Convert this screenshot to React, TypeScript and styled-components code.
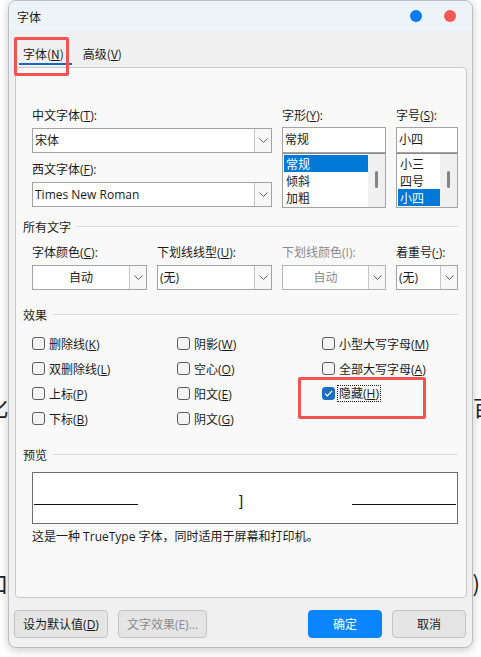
import React from "react";
import styled, { createGlobalStyle, css } from "styled-components";

const Global = createGlobalStyle`
  html, body { margin: 0; padding: 0; background: #ffffff; }
  body {
    width: 481px; height: 657px; overflow: hidden;
    font-family: "Open Sans", "Noto Sans CJK SC", sans-serif;
    font-size: 12px; color: #1a1a1a;
  }
  * { box-sizing: border-box; }
`;

const Desktop = styled.div`
  position: relative;
  width: 481px;
  height: 657px;
  overflow: hidden;
  background: #ffffff;
`;

const Doc = styled.div`
  display: flex;
  flex-direction: column;
  gap: 152px;
  padding-top: 394px;
  margin: 0 -14px;
  font-family: "Noto Sans CJK SC", serif;
  font-size: 22px;
  line-height: 24px;
  color: #222;
`;

const DocLine = styled.div<{ $right: number }>`
  display: flex;
  justify-content: space-between;
  padding-right: ${(p) => p.$right}px;
`;

const Window = styled.div`
  position: absolute;
  left: 8px;
  top: 0;
  width: 465px;
  height: 648px;
  border: 1px solid #bdbdbd;
  border-radius: 8px;
  background: #f0f0f0;
  box-shadow: 0 2px 10px rgba(0, 0, 0, 0.22);
  display: flex;
  flex-direction: column;
  overflow: hidden;
`;

const TitleBar = styled.div`
  height: 30px;
  flex: none;
  background: #edf4f8;
  display: flex;
  align-items: center;
  padding: 0 16px 0 8px;
  font-family: "Noto Sans CJK SC", sans-serif;
  font-size: 12px;
`;

const Title = styled.span`
  flex: 1;
`;

const Dot = styled.span<{ $color: string }>`
  width: 12px;
  height: 12px;
  border-radius: 50%;
  background: ${(p) => p.$color};
  & + & { margin-left: 22px; }
`;

const Body = styled.div`
  flex: 1;
  display: flex;
  flex-direction: column;
  padding: 0 5px 9px 6px;
`;

const TabBar = styled.div`
  height: 36px;
  flex: none;
  display: flex;
  gap: 7px;
  padding-left: 4px;
`;

const Tab = styled.div<{ $active?: boolean }>`
  display: flex;
  flex-direction: column;
  padding: 14px 8px 2px 4px;
  line-height: 18px;
  font-family: "Noto Sans CJK SC", sans-serif;
  &::after {
    content: "";
    height: 2px;
    margin: 0 -8px 0 -4px;
    background: ${(p) => (p.$active ? "#1a67c4" : "transparent")};
  }
`;

const Panel = styled.div`
  height: 531px;
  flex: none;
  border: 1px solid #c9c9c9;
  border-radius: 4px;
  background: #f9f9f9;
  padding: 40px 8px 0 7px;
  display: flex;
  flex-direction: column;
`;

const FontGrid = styled.div`
  display: grid;
  grid-template-columns: 240px 104px 62px;
  column-gap: 10px;
  padding-left: 9px;
`;

const Col = styled.div`
  display: flex;
  flex-direction: column;
`;

const Label = styled.div<{ $disabled?: boolean; $gap?: number; $top?: number }>`
  line-height: 16px;
  height: 16px;
  white-space: nowrap;
  margin-bottom: ${(p) => p.$gap ?? 4}px;
  margin-top: ${(p) => p.$top ?? 0}px;
  color: ${(p) => (p.$disabled ? "#8a8a8a" : "#1a1a1a")};
  u { text-underline-offset: 1px; }
`;

const ComboBox = styled.div<{ $disabled?: boolean }>`
  height: 25px;
  display: flex;
  border: 1px solid ${(p) => (p.$disabled ? "#b4b4b4" : "#a3a3a3")};
  background: #ffffff;
  color: ${(p) => (p.$disabled ? "#8c8c8c" : "#1a1a1a")};
`;

const ComboValue = styled.div<{ $center?: boolean }>`
  flex: 1;
  line-height: 23px;
  padding-left: 2px;
  white-space: nowrap;
  overflow: hidden;
  ${(p) =>
    p.$center &&
    css`
      text-align: center;
      padding-left: 0;
    `}
`;

const DropButton = styled.div`
  width: 17px;
  border-left: 1px solid #c6c6c6;
  background: #f7f7f7;
  display: flex;
  align-items: center;
  justify-content: center;
`;

const TextInput = styled.div`
  height: 26px;
  border: 1px solid #a3a3a3;
  background: #ffffff;
  line-height: 24px;
  padding-left: 2px;
`;

const ListBox = styled.div`
  height: 55px;
  border: 1px solid #a3a3a3;
  border-top-color: #8c8c8c;
  background: #ffffff;
  display: flex;
  padding: 1px 0 1px 1px;
`;

const ListItems = styled.div`
  flex: 1;
  display: flex;
  flex-direction: column;
`;

const ListItem = styled.div<{ $selected?: boolean }>`
  height: 17px;
  line-height: 17px;
  padding-left: 2px;
  font-family: "Noto Sans CJK SC", sans-serif;
  background: ${(p) => (p.$selected ? "#0078d7" : "transparent")};
  color: ${(p) => (p.$selected ? "#ffffff" : "#1a1a1a")};
`;

const ScrollTrack = styled.div`
  width: 17px;
  background: #f0f0f0;
  display: flex;
  justify-content: center;
  padding-top: 17px;
  margin: -1px 0;
`;

const ScrollThumb = styled.div`
  width: 3px;
  height: 17px;
  border-radius: 2px;
  background: #858585;
`;

const SectionHead = styled.div<{ $top: number }>`
  display: flex;
  align-items: center;
  gap: 6px;
  height: 16px;
  line-height: 16px;
  margin-top: ${(p) => p.$top}px;
  font-family: "Noto Sans CJK SC", sans-serif;
  &::after {
    content: "";
    flex: 1;
    height: 1px;
    background: #dadada;
    margin-top: -2px;
  }
`;

const ComboRow = styled.div`
  display: grid;
  grid-template-columns: 115px 115px 104px 62px;
  column-gap: 10px;
  padding-left: 9px;
  margin-top: 10px;
`;

const EffectsGrid = styled.div`
  display: grid;
  grid-template-columns: 145px 145px 1fr;
  grid-auto-flow: column;
  grid-template-rows: repeat(4, 25px);
  padding-left: 9px;
  margin-top: 8px;
`;

const Check = styled.div`
  display: flex;
  align-items: center;
  gap: 4px;
  white-space: nowrap;
  u { text-underline-offset: 1px; }
`;

const Box = styled.span<{ $checked?: boolean }>`
  width: 13px;
  height: 13px;
  flex: none;
  border-radius: 3px;
  border: 1px solid ${(p) => (p.$checked ? "#1b6ec2" : "#5c5c5c")};
  background: ${(p) => (p.$checked ? "#1b6ec2" : "#f4f4f4")};
  display: flex;
  align-items: center;
  justify-content: center;
`;

const FocusLabel = styled.span`
  border: 1px dotted #222;
  padding: 0 1px;
  line-height: 15px;
  margin-left: -2px;
`;

const PreviewBox = styled.div`
  height: 52px;
  margin: 9px 0 0 9px;
  border: 1px solid #6e6e6e;
  background: #ffffff;
  display: grid;
  grid-template-columns: 104px 1fr 104px;
  align-items: end;
  padding: 0 1px 18px 1px;
`;

const PreviewRule = styled.div`
  height: 1px;
  background: #111;
`;

const PreviewSample = styled.div`
  text-align: center;
  line-height: 16px;
  margin-bottom: -4px;
  font-family: "Liberation Sans", sans-serif;
  font-size: 15px;
  color: #222;
  padding-right: 8px;
`;

const Caption = styled.div`
  margin: 5px 0 0 9px;
  line-height: 16px;
  white-space: nowrap;
`;

const ButtonRow = styled.div`
  display: flex;
  gap: 10px;
  margin: 12px 1px 0 -1px;
`;

const Spacer = styled.div`
  flex: 1;
`;

const Button = styled.button<{ $w: number; $primary?: boolean; $disabled?: boolean }>`
  width: ${(p) => p.$w}px;
  height: 28px;
  border-radius: 4px;
  font: inherit;
  font-size: 12px;
  padding: 0;
  border: 1px solid ${(p) => (p.$primary ? "#0a84ff" : "#c3c3c3")};
  background: ${(p) => (p.$primary ? "#0a84ff" : "#e5e5e5")};
  color: ${(p) => (p.$primary ? "#ffffff" : p.$disabled ? "#8c8c8c" : "#1a1a1a")};
  u { text-underline-offset: 1px; }
`;

const Annotation = styled.div<{ $x: number; $y: number; $w: number; $h: number }>`
  position: absolute;
  left: ${(p) => p.$x}px;
  top: ${(p) => p.$y}px;
  width: ${(p) => p.$w}px;
  height: ${(p) => p.$h}px;
  border: 3px solid #f25454;
  border-radius: 2px;
  pointer-events: none;
`;

const Chevron = () => (
  <svg width="9" height="5" viewBox="0 0 9 5">
    <polyline points="0.5,0.5 4.5,4.5 8.5,0.5" fill="none" stroke="#606060" strokeWidth="1" />
  </svg>
);

const Tick = () => (
  <svg width="9" height="7" viewBox="0 0 9 7">
    <polyline points="1,3.6 3.3,5.8 8,1" fill="none" stroke="#ffffff" strokeWidth="1.2" />
  </svg>
);

const Combo: React.FC<{ value: string; disabled?: boolean; center?: boolean }> = ({ value, disabled, center }) => (
  <ComboBox $disabled={disabled}>
    <ComboValue $center={center}>{value}</ComboValue>
    <DropButton>
      <Chevron />
    </DropButton>
  </ComboBox>
);

const effects: { label: string; key: string; checked?: boolean }[][] = [
  [
    { label: "删除线", key: "K" },
    { label: "双删除线", key: "L" },
    { label: "上标", key: "P" },
    { label: "下标", key: "B" },
  ],
  [
    { label: "阴影", key: "W" },
    { label: "空心", key: "O" },
    { label: "阳文", key: "E" },
    { label: "阴文", key: "G" },
  ],
  [
    { label: "小型大写字母", key: "M" },
    { label: "全部大写字母", key: "A" },
    { label: "隐藏", key: "H", checked: true },
  ],
];

export default function App() {
  return (
    <Desktop>
      <Global />
      <Doc>
        <DocLine $right={0}>
          <span>化</span>
          <span>百</span>
        </DocLine>
        <DocLine $right={15}>
          <span>口</span>
          <span>)</span>
        </DocLine>
      </Doc>
      <Window>
        <TitleBar>
          <Title>字体</Title>
          <Dot $color="#0a7bf0" />
          <Dot $color="#f55a55" />
        </TitleBar>
        <Body>
          <TabBar>
            <Tab $active>
              <span>
                字体(<u>N</u>)
              </span>
            </Tab>
            <Tab>
              <span>
                高级(<u>V</u>)
              </span>
            </Tab>
          </TabBar>
          <Panel>
            <FontGrid>
              <Col>
                <Label>
                  中文字体(<u>T</u>):
                </Label>
                <Combo value="宋体" />
                <Label $top={9}>
                  西文字体(<u>F</u>):
                </Label>
                <Combo value="Times New Roman" />
              </Col>
              <Col>
                <Label $gap={3}>
                  字形(<u>Y</u>):
                </Label>
                <TextInput>常规</TextInput>
                <ListBox>
                  <ListItems>
                    <ListItem $selected>常规</ListItem>
                    <ListItem>倾斜</ListItem>
                    <ListItem>加粗</ListItem>
                  </ListItems>
                  <ScrollTrack>
                    <ScrollThumb />
                  </ScrollTrack>
                </ListBox>
              </Col>
              <Col>
                <Label $gap={3}>
                  字号(<u>S</u>):
                </Label>
                <TextInput>小四</TextInput>
                <ListBox>
                  <ListItems>
                    <ListItem>小三</ListItem>
                    <ListItem>四号</ListItem>
                    <ListItem $selected>小四</ListItem>
                  </ListItems>
                  <ScrollTrack>
                    <ScrollThumb />
                  </ScrollTrack>
                </ListBox>
              </Col>
            </FontGrid>

            <SectionHead $top={11}>所有文字</SectionHead>
            <ComboRow>
              <Col>
                <Label>
                  字体颜色(<u>C</u>):
                </Label>
                <Combo value="自动" center />
              </Col>
              <Col>
                <Label>
                  下划线线型(<u>U</u>):
                </Label>
                <Combo value="(无)" />
              </Col>
              <Col>
                <Label $disabled>下划线颜色(I):</Label>
                <Combo value="自动" center disabled />
              </Col>
              <Col>
                <Label>
                  着重号(<u>·</u>):
                </Label>
                <Combo value="(无)" />
              </Col>
            </ComboRow>

            <SectionHead $top={17}>效果</SectionHead>
            <EffectsGrid>
              {effects.map((col, ci) =>
                col.map((e) => (
                  <Check key={`${ci}-${e.key}`}>
                    <Box $checked={e.checked}>{e.checked && <Tick />}</Box>
                    {e.checked ? (
                      <FocusLabel>
                        {e.label}(<u>{e.key}</u>)
                      </FocusLabel>
                    ) : (
                      <span>
                        {e.label}(<u>{e.key}</u>)
                      </span>
                    )}
                  </Check>
                ))
              )}
            </EffectsGrid>

            <SectionHead $top={16}>预览</SectionHead>
            <PreviewBox>
              <PreviewRule />
              <PreviewSample>]</PreviewSample>
              <PreviewRule />
            </PreviewBox>
            <Caption>这是一种 TrueType 字体，同时适用于屏幕和打印机。</Caption>
          </Panel>
          <ButtonRow>
            <Button $w={94}>
              设为默认值(<u>D</u>)
            </Button>
            <Button $w={89} $disabled>
              文字效果(E)...
            </Button>
            <Spacer />
            <Button $w={74} $primary>
              确定
            </Button>
            <Button $w={74}>取消</Button>
          </ButtonRow>
        </Body>
        <Annotation $x={5} $y={36} $w={55} $h={39} />
        <Annotation $x={289} $y={376} $w={128} $h={42} />
      </Window>
    </Desktop>
  );
}
